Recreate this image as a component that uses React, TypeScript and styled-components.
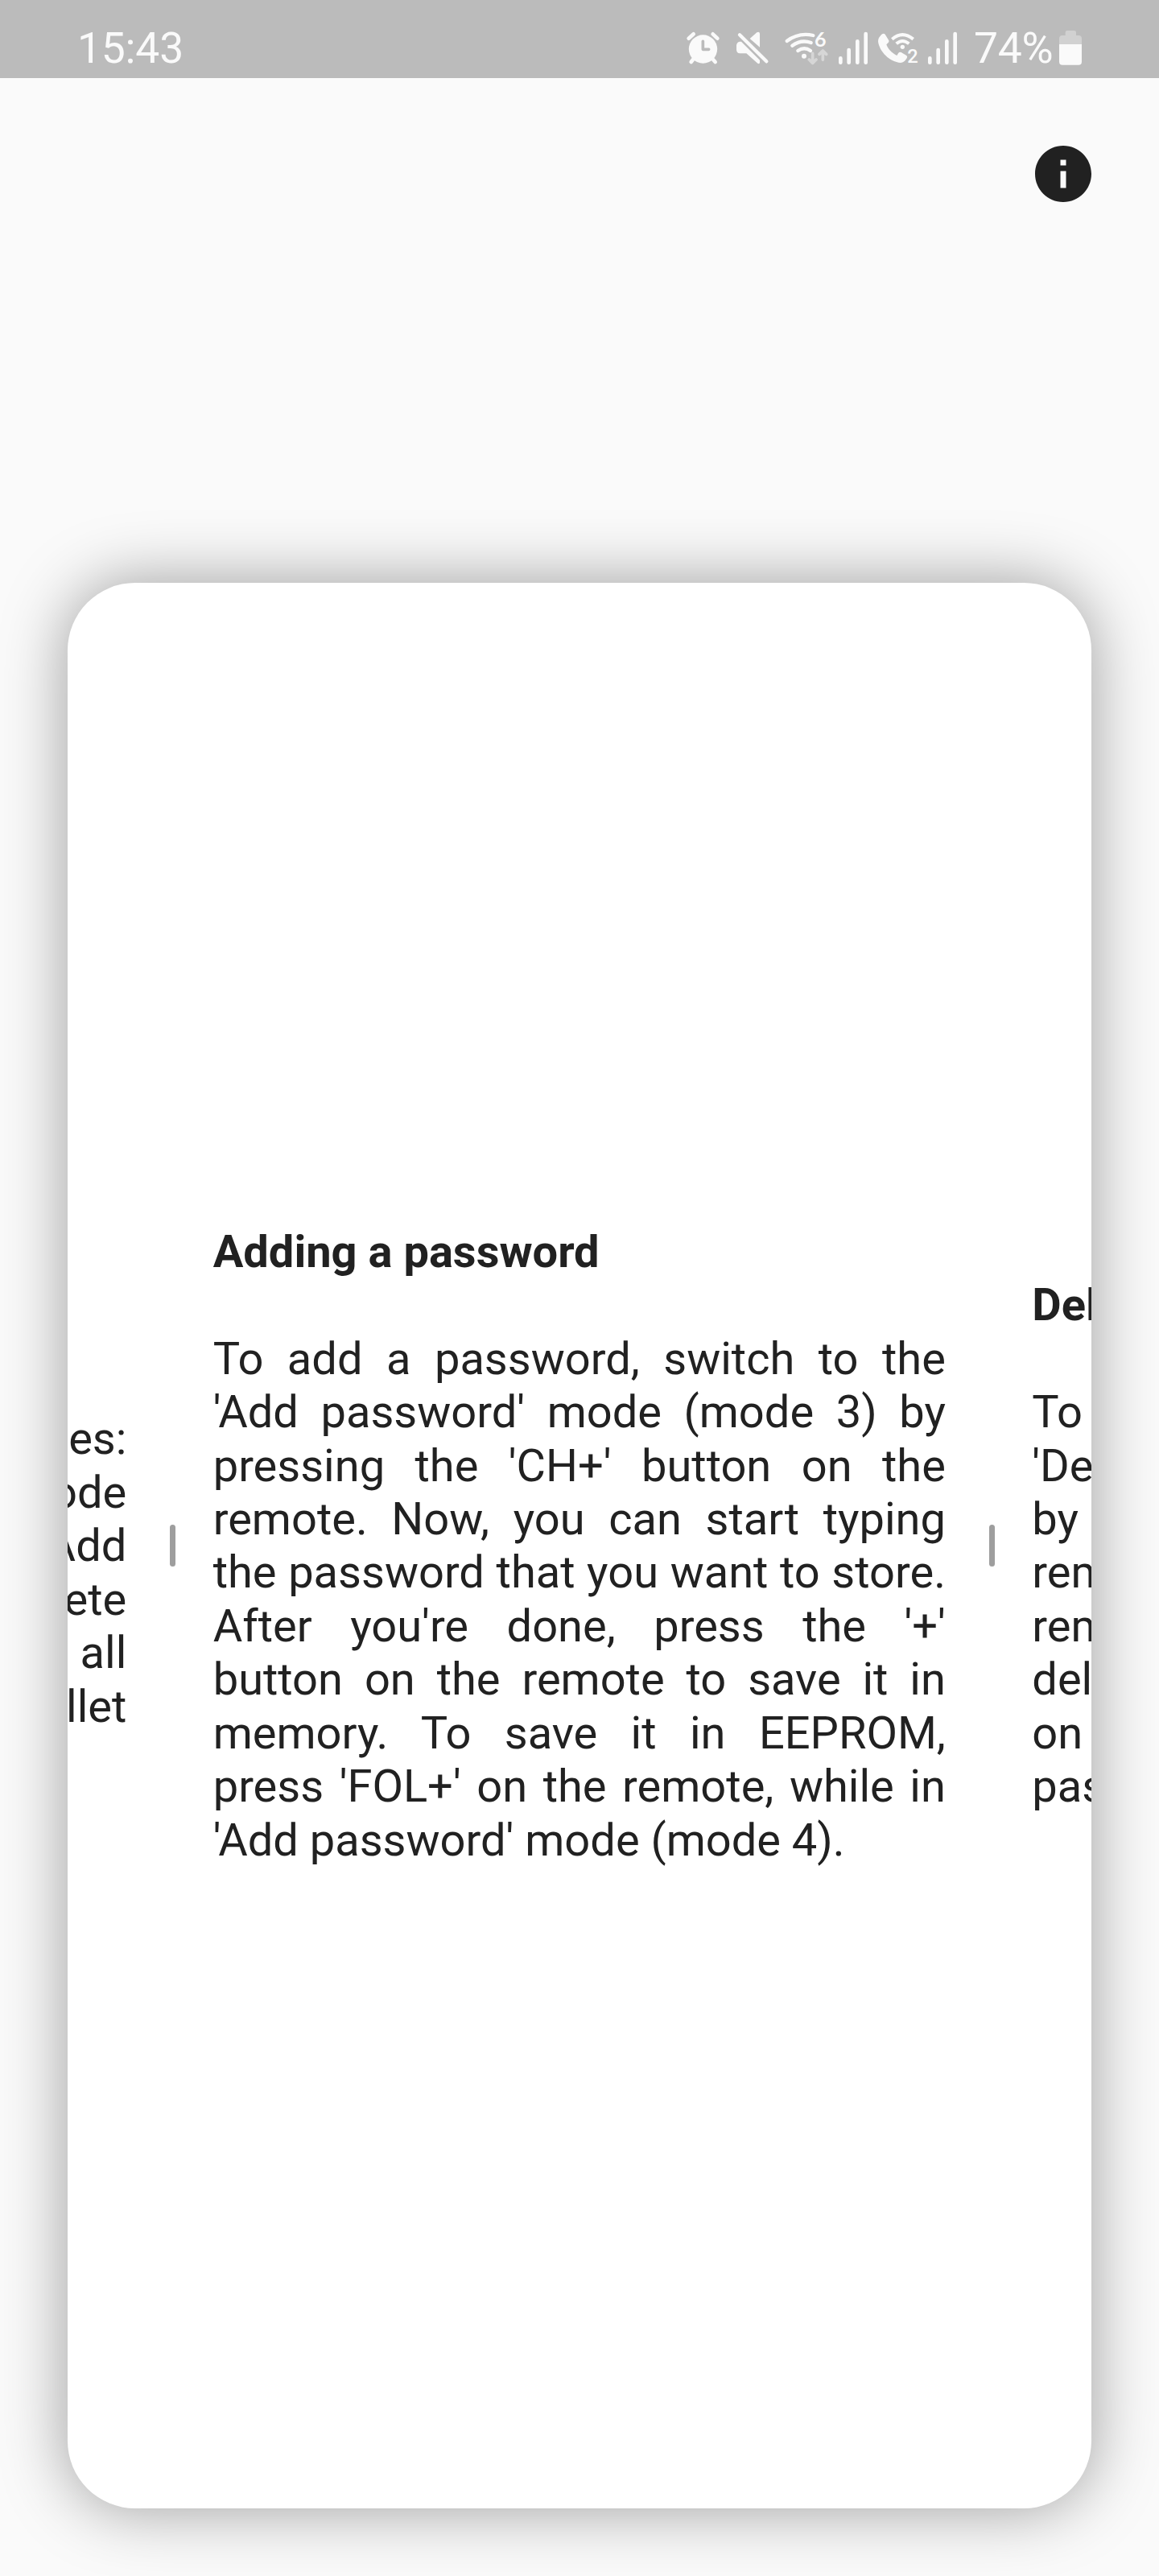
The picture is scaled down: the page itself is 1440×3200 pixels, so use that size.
import React from "react";
import styled, { createGlobalStyle } from "styled-components";

const GlobalStyle = createGlobalStyle`
  body {
    margin: 0;
    background: #fafafa;
  }
`;

const Screen = styled.main`
  display: flex;
  flex-direction: column;
  width: 1440px;
  height: 3200px;
  overflow: hidden;
  background: #fafafa;
  color: #212121;
  font-family: Roboto, "Liberation Sans", sans-serif;
`;

const StatusBar = styled.header`
  display: flex;
  justify-content: space-between;
  box-sizing: border-box;
  flex: none;
  height: 97px;
  padding: 0 95px 0 96px;
  background: #bbbbbb;
  color: #fafafa;
`;

const StatusText = styled.span<{ $width: number }>`
  width: ${(p) => p.$width}px;
  padding-top: 28px;
  font-size: 53.4px;
  line-height: 64px;
  letter-spacing: -0.2px;
  white-space: nowrap;
`;

const StatusIcons = styled.div`
  display: flex;
  align-items: flex-start;
`;

const Glyph = styled.svg<{ $gap: number }>`
  flex: none;
  display: block;
  height: 44px;
  margin: 38px ${(p) => p.$gap}px 0 0;
  overflow: visible;
  fill: #fafafa;
  stroke: none;
`;

const Toolbar = styled.nav`
  display: flex;
  justify-content: flex-end;
  flex: none;
  height: 550px;
  padding: 77px 77px 0 0;
`;

const InfoButton = styled.button`
  display: block;
  width: 84px;
  height: 84px;
  padding: 0;
  border: 0;
  background: none;
  color: #212121;
`;

const Card = styled.section`
  display: flex;
  justify-content: center;
  flex: none;
  width: 1272px;
  height: 2392px;
  margin: 0 84px;
  overflow: hidden;
  border-radius: 84px;
  background: #fff;
  box-shadow: 0 0 82px rgba(0, 0, 0, 0.38);
`;

const Page = styled.article`
  display: flex;
  align-items: center;
  flex: none;
  gap: 46.5px;
  width: 1017.6px;
`;

const Divider = styled.div`
  flex: none;
  width: 7px;
  height: 52.5px;
  border-radius: 3.5px;
  background: #9e9e9e;
`;

const Copy = styled.div<{ $align?: string }>`
  width: 910.2px;
  padding-top: 1px;
  font-size: 56px;
  line-height: 66.45px;
  text-align: ${(p) => p.$align ?? "justify"};
  white-space: ${(p) => (p.$align ? "pre-line" : "normal")};
`;

const Title = styled.h2`
  min-height: 66.45px;
  margin: 0 0 66.45px;
  font-size: inherit;
  font-weight: 700;
  text-align: left;
`;

const Body = styled.p`
  margin: 0;
`;

const AlarmIcon = () => (
  <Glyph $gap={18} width="44" viewBox="36 54 132 132">
    <circle cx="100.500" cy="123" r="53" />
    <path
      d="M47 83L65 67M154 83L137 67M63 162L56 171M138 162L146 171"
      stroke="#fafafa"
      strokeWidth="14"
      strokeLinecap="round"
    />
    <path d="M100 94V124H122" fill="none" stroke="#bbbbbb" strokeWidth="11" strokeLinecap="round" strokeLinejoin="round" />
  </Glyph>
);

const MuteIcon = () => (
  <Glyph $gap={18} width="42" viewBox="222 54 126 132">
    <path d="M275 84L301 61Q311 56 312 66V116Z" />
    <path d="M237 95H243L312 164V173Q311 180 304 176L262 139H238Q225 137 225 125V109Q226 97 237 95Z" />
    <path d="M237 70L337 169" fill="none" stroke="#fafafa" strokeWidth="13" strokeLinecap="round" />
  </Glyph>
);

const WifiIcon = () => (
  <Glyph $gap={11} width="56" viewBox="402 54 168 132">
    <g fill="none" stroke="#fafafa" strokeWidth="13" strokeLinecap="round">
      <path d="M413 93Q457 60 511 72" />
      <path d="M433 110Q465 86 503 99" />
      <path d="M454 129Q478 112 501 129" />
    </g>
    <circle cx="477" cy="149" r="9" />
    <path
      d="M509 139V174M496 162L509 175L522 162M547 163V129M534 142L547 129L560 142"
      fill="none"
      stroke="#d6d6d6"
      strokeWidth="11"
      strokeLinecap="round"
      strokeLinejoin="round"
    />
    <text
      x="516"
      y="114"
      fontFamily="Lato"
      fontSize="75"
      fontWeight="700"
      stroke="#bbbbbb"
      strokeWidth="8"
      paintOrder="stroke"
    >
      6
    </text>
  </Glyph>
);

const SignalIcon = ({ gap }: { gap: number }) => (
  <Glyph $gap={gap} width="38" viewBox="603 54 114 132">
    <path
      d="M613 157V173M644 126V173M676 94V173M707 66V173"
      stroke="#fafafa"
      strokeWidth="14"
      strokeLinecap="round"
    />
  </Glyph>
);

const WifiCallIcon = () => (
  <Glyph $gap={11} width="51" viewBox="30 54 153 132">
    <path d="M48 67Q57 62 61 71L73 91Q75 97 70 100L64 106C69 122 85 138 103 147L109 137Q113 132 119 135L139 147Q144 151 140 157Q130 174 117 174C77 172 37 132 33 94Q33 80 48 67Z" />
    <g fill="none" stroke="#fafafa" strokeWidth="12">
      <path d="M85 86Q124 53 164 86" />
      <path d="M101 103Q124 83 148 103" />
    </g>
    <circle cx="124" cy="115" r="8" />
    <text
      x="142"
      y="173"
      fontFamily="Roboto"
      fontSize="71"
      fontWeight="500"
      stroke="#bbbbbb"
      strokeWidth="8"
      paintOrder="stroke"
    >
      2
    </text>
  </Glyph>
);

const BatteryIcon = () => (
  <Glyph $gap={0} width="30" viewBox="705 54 90 132">
    <path
      fill="#d1d1d1"
      d="M738 54H764Q771 54 771 61V72H780Q792 72 792 84V105H708V84Q708 72 720 72H731V61Q731 54 738 54Z"
    />
    <path d="M708 105H792V170Q792 182 780 182H720Q708 182 708 170Z" />
  </Glyph>
);

const previousLines = ["modes:", "mode", "Add", "delete", "all", "wallet"];

const nextLines = ["To", "'Delete", "by", "remote.", "remote", "delete", "on", "password"];

export default function App() {
  return (
    <>
      <GlobalStyle />
      <Screen>
        <StatusBar>
          <StatusText $width={140}>15:43</StatusText>
          <StatusIcons>
            <AlarmIcon />
            <MuteIcon />
            <WifiIcon />
            <SignalIcon gap={11} />
            <WifiCallIcon />
            <SignalIcon gap={20} />
            <StatusText $width={105}>74%</StatusText>
            <BatteryIcon />
          </StatusIcons>
        </StatusBar>
        <Toolbar>
          <InfoButton aria-label="Info">
            <svg width="84" height="84" viewBox="0 0 24 24" fill="currentColor">
              <path d="M12 2C6.480 2 2 6.480 2 12s4.480 10 10 10 10-4.480 10-10S17.520 2 12 2zm1 15h-2v-6h2v6zm0-8h-2V7h2v2z" />
            </svg>
          </InfoButton>
        </Toolbar>
        <Card>
          <Page>
            <Divider />
            <Copy $align="right">
              <Title />
              <Body>{previousLines.join("\n") + "\n\u00a0"}</Body>
            </Copy>
          </Page>
          <Page>
            <Divider />
            <Copy>
              <Title>Adding a password</Title>
              <Body>
                To add a password, switch to the 'Add password' mode (mode 3) by pressing the 'CH+'
                button on the remote. Now, you can start typing the password that you want to store.
                After you're done, press the '+' button on the remote to save it in memory. To save it
                in EEPROM, press 'FOL+' on the remote, while in 'Add password' mode (mode 4).
              </Body>
            </Copy>
          </Page>
          <Page>
            <Divider />
            <Copy $align="left">
              <Title>Deleting</Title>
              <Body>{nextLines.join("\n")}</Body>
            </Copy>
          </Page>
        </Card>
      </Screen>
    </>
  );
}
